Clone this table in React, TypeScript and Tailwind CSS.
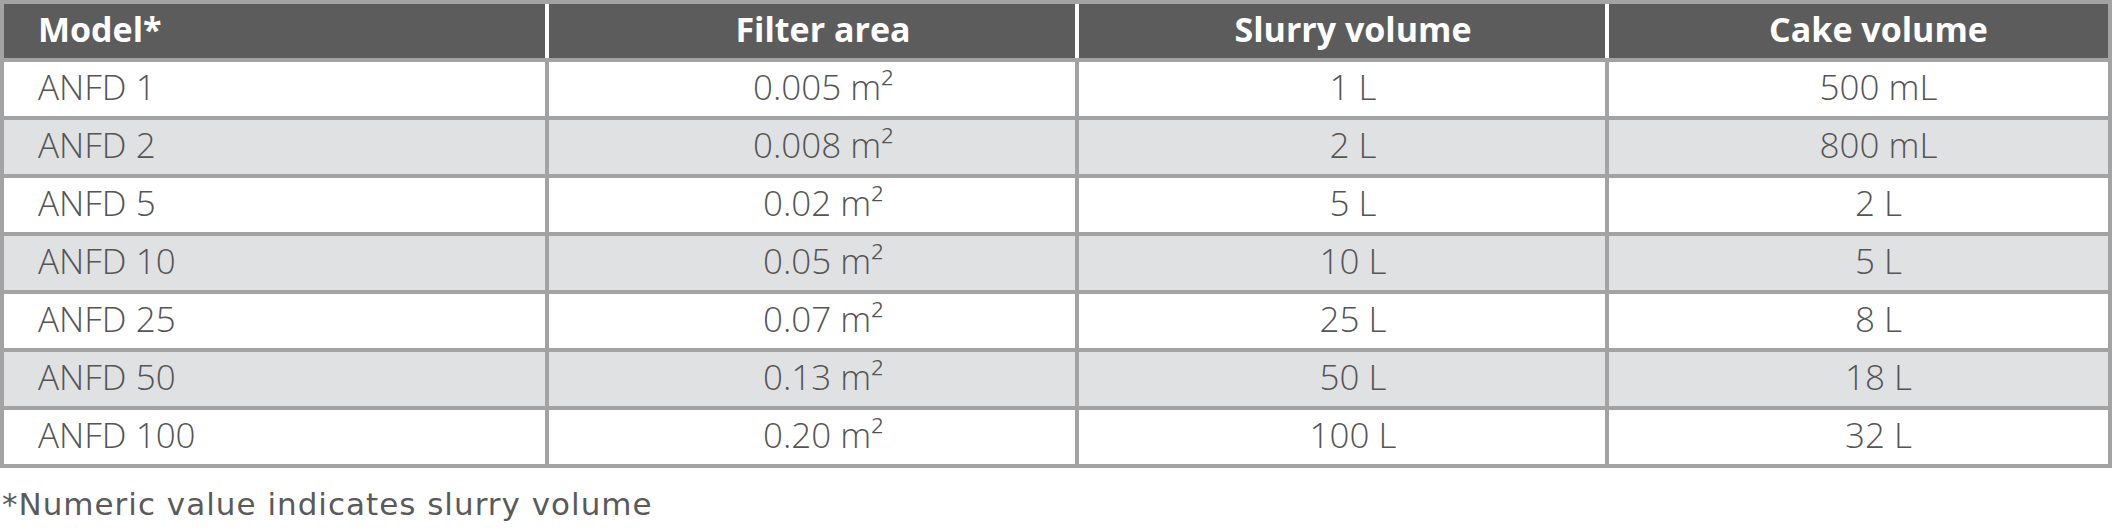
const rows = [
  ["ANFD 1", "0.005 m²", "1 L", "500 mL"],
  ["ANFD 2", "0.008 m²", "2 L", "800 mL"],
  ["ANFD 5", "0.02 m²", "5 L", "2 L"],
  ["ANFD 10", "0.05 m²", "10 L", "5 L"],
  ["ANFD 25", "0.07 m²", "25 L", "8 L"],
  ["ANFD 50", "0.13 m²", "50 L", "18 L"],
  ["ANFD 100", "0.20 m²", "100 L", "32 L"],
];

const cols = "grid grid-cols-[541px_526px_526px_1fr] gap-[4px]";
// text in the value columns sits a bit right of centre
const align = ["pl-[34px]", "justify-center pl-[22px]", "justify-center pl-[22px]", "justify-center pl-[40px]"];

export default function App() {
  return (
    <div className="w-[2112px] h-[529px] bg-white font-['Open_Sans',sans-serif]">
      {/* table */}
      <div className="flex flex-col gap-[4px] bg-[#a3a3a3] p-[4px]">
        <div className={`${cols} bg-white`}>
          {["Model*", "Filter area", "Slurry volume", "Cake volume"].map((h, i) => (
            <div
              key={h}
              className={`h-[54px] bg-[#5c5c5c] flex items-center pb-[4px] text-white font-bold text-[34px] ${align[i]}`}
            >
              {h}
            </div>
          ))}
        </div>
        {rows.map((r, idx) => (
          <div key={r[0]} className={cols}>
            {r.map((c, i) => (
              <div
                key={i}
                className={`h-[54px] flex items-center pb-[4px] text-[35px] font-light text-[#555555] ${
                  idx % 2 === 1 ? "bg-[#e0e1e3]" : "bg-white"
                } ${align[i]}`}
              >
                {c}
              </div>
            ))}
          </div>
        ))}
      </div>
      {/* footnote */}
      <p className="pl-[2px] pt-[16px] text-[31px] leading-[40px] tracking-[1px] text-[#5a5a5a] font-['DejaVu_Sans',sans-serif]">
        *Numeric value indicates slurry volume
      </p>
    </div>
  );
}
